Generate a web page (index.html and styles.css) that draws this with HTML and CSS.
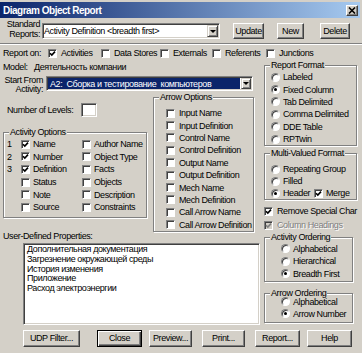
FILE: index.html
```html
<!DOCTYPE html>
<html lang="en">
<head>
  <meta charset="UTF-8">
  <title>Diagram Object Report</title>
  <link rel="stylesheet" href="styles.css">
</head>
<body>
  <div class="dialog">
    <div class="titlebar">
      <span class="title">Diagram Object Report</span>
      <span class="close-btn"><svg width="8" height="7" viewBox="0 0 8 7"><path d="M1 0.5 L7 6.5 M7 0.5 L1 6.5" stroke="#000" stroke-width="1.6"/></svg></span>
    </div>

    <div class="std-row">
      <div class="std-label">Standard<br>Reports:</div>
      <div class="combo std-combo">
        <span class="combo-text">Activity Definition &lt;breadth first&gt;</span>
        <span class="drop-btn"><span class="arrow"></span></span>
      </div>
      <button class="btn btn-update">Update</button>
      <button class="btn btn-new">New</button>
      <button class="btn btn-delete">Delete</button>
    </div>
    <div class="separator"></div>

    <div class="report-on">
      <span>Report on:</span>
      <label class="chk"><span class="cb"><svg width="7" height="7" viewBox="0 0 7 7"><polyline points="1,3.2 2.8,5 6,1.6" fill="none" stroke="#000" stroke-width="1.6"/></svg></span>Activities</label>
      <label class="chk"><span class="cb"></span>Data Stores</label>
      <label class="chk"><span class="cb"></span>Externals</label>
      <label class="chk"><span class="cb"></span>Referents</label>
      <label class="chk"><span class="cb"></span>Junctions</label>
    </div>

    <div class="main">
      <div class="left">
        <div class="model">
          <span class="model-label">Model:</span>
          <span>Деятельность компании</span>
        </div>
        <div class="start">
          <div class="start-label">Start From<br>Activity:</div>
          <div class="combo start-combo">
            <span class="combo-text">A2:&nbsp; Сборка и тестирование&nbsp; компьютеров</span>
            <span class="drop-btn"><span class="arrow"></span></span>
          </div>
        </div>

        <div class="mid">
          <div class="levels-col">
            <div class="levels">
              <span class="levels-label">Number of Levels:</span>
              <span class="field levels-box"></span>
            </div>
            <fieldset class="group act-opts">
              <legend>Activity Options</legend>
              <div class="opts">
                <span>1</span>
                <label class="chk"><span class="cb"><svg width="7" height="7" viewBox="0 0 7 7"><polyline points="1,3.2 2.8,5 6,1.6" fill="none" stroke="#000" stroke-width="1.6"/></svg></span>Name</label>
                <label class="chk"><span class="cb"></span>Author Name</label>
                <span>2</span>
                <label class="chk"><span class="cb"><svg width="7" height="7" viewBox="0 0 7 7"><polyline points="1,3.2 2.8,5 6,1.6" fill="none" stroke="#000" stroke-width="1.6"/></svg></span>Number</label>
                <label class="chk"><span class="cb"></span>Object Type</label>
                <span>3</span>
                <label class="chk"><span class="cb"><svg width="7" height="7" viewBox="0 0 7 7"><polyline points="1,3.2 2.8,5 6,1.6" fill="none" stroke="#000" stroke-width="1.6"/></svg></span>Definition</label>
                <label class="chk"><span class="cb"></span>Facts</label>
                <span></span>
                <label class="chk"><span class="cb"></span>Status</label>
                <label class="chk"><span class="cb"></span>Objects</label>
                <span></span>
                <label class="chk"><span class="cb"></span>Note</label>
                <label class="chk"><span class="cb"></span>Description</label>
                <span></span>
                <label class="chk"><span class="cb"></span>Source</label>
                <label class="chk"><span class="cb"></span>Constraints</label>
              </div>
            </fieldset>
          </div>

          <fieldset class="group arrow-opts">
            <legend>Arrow Options</legend>
            <div class="opts">
              <label class="chk"><span class="cb"></span>Input Name</label>
              <label class="chk"><span class="cb"></span>Input Definition</label>
              <label class="chk"><span class="cb"></span>Control Name</label>
              <label class="chk"><span class="cb"></span>Control Definition</label>
              <label class="chk"><span class="cb"></span>Output Name</label>
              <label class="chk"><span class="cb"></span>Output Definition</label>
              <label class="chk"><span class="cb"></span>Mech Name</label>
              <label class="chk"><span class="cb"></span>Mech Definition</label>
              <label class="chk"><span class="cb"></span>Call Arrow Name</label>
              <label class="chk"><span class="cb"></span>Call Arrow Definition</label>
            </div>
          </fieldset>
        </div>

        <div class="udp-label">User-Defined Properties:</div>
        <div class="field udp-list">
          <div>Дополнительная документация</div>
          <div>Загрезнение окружающей среды</div>
          <div>История изменения</div>
          <div>Приложение</div>
          <div>Расход электроэнергии</div>
        </div>
      </div>

      <div class="right">
        <fieldset class="group rpt-format">
          <legend>Report Format</legend>
          <div class="opts">
            <label class="chk"><span class="rb"></span>Labeled</label>
            <label class="chk"><span class="rb on"></span>Fixed Column</label>
            <label class="chk"><span class="rb"></span>Tab Delimited</label>
            <label class="chk"><span class="rb"></span>Comma Delimited</label>
            <label class="chk"><span class="rb"></span>DDE Table</label>
            <label class="chk"><span class="rb"></span>RPTwin</label>
          </div>
        </fieldset>

        <fieldset class="group multi">
          <legend>Multi-Valued Format</legend>
          <div class="opts">
            <label class="chk"><span class="rb"></span>Repeating Group</label>
            <label class="chk"><span class="rb"></span>Filled</label>
            <div class="header-row">
              <label class="chk header-item"><span class="rb on"></span>Header</label>
              <label class="chk"><span class="cb"><svg width="7" height="7" viewBox="0 0 7 7"><polyline points="1,3.2 2.8,5 6,1.6" fill="none" stroke="#000" stroke-width="1.6"/></svg></span>Merge</label>
            </div>
          </div>
        </fieldset>

        <div class="extra">
          <label class="chk"><span class="cb"><svg width="7" height="7" viewBox="0 0 7 7"><polyline points="1,3.2 2.8,5 6,1.6" fill="none" stroke="#000" stroke-width="1.6"/></svg></span>Remove Special Char</label>
          <label class="chk disabled"><span class="cb"><svg width="7" height="7" viewBox="0 0 7 7"><polyline points="1,3.2 2.8,5 6,1.6" fill="none" stroke="#808080" stroke-width="1.6"/></svg></span>Column Headings</label>
        </div>

        <fieldset class="group act-order">
          <legend>Activity Ordering</legend>
          <div class="opts">
            <label class="chk"><span class="rb"></span>Alphabetical</label>
            <label class="chk"><span class="rb"></span>Hierarchical</label>
            <label class="chk"><span class="rb on"></span>Breadth First</label>
          </div>
        </fieldset>

        <fieldset class="group arrow-order">
          <legend>Arrow Ordering</legend>
          <div class="opts">
            <label class="chk"><span class="rb"></span>Alphabetical</label>
            <label class="chk"><span class="rb on"></span>Arrow Number</label>
          </div>
        </fieldset>
      </div>
    </div>

    <div class="buttons">
      <button class="btn btn-udp">UDP Filter...</button>
      <button class="btn btn-default btn-close">Close</button>
      <button class="btn btn-preview">Preview...</button>
      <button class="btn btn-print">Print...</button>
      <button class="btn btn-report">Report...</button>
      <button class="btn btn-help">Help</button>
    </div>
  </div>
</body>
</html>
```

FILE: styles.css
```css
* {
  box-sizing: border-box;
}
body {
  margin: 0;
  background: #d4d0c8;
  font-family: "Liberation Sans", Arial, sans-serif;
  font-size: 9px;
  letter-spacing: -0.4px;
  color: #000;
}
.dialog {
  width: 362px;
  height: 353px;
  overflow: hidden;
  padding-top: 2px;
}

/* title bar */
.titlebar {
  height: 16px;
  margin-right: 2px;
  padding: 0 2px 0 3px;
  display: flex;
  align-items: center;
  justify-content: space-between;
  background: linear-gradient(to right, #0a246a, #a6caf0);
}
.title {
  color: #fff;
  font-weight: bold;
  font-size: 10px;
  letter-spacing: -0.5px;
}
.close-btn {
  width: 12px;
  height: 11px;
  display: flex;
  align-items: center;
  justify-content: center;
  background: #d4d0c8;
  border: 1px solid;
  border-color: #fff #404040 #404040 #fff;
  box-shadow: inset -1px -1px #808080;
}

/* common controls */
.btn {
  font: inherit;
  letter-spacing: inherit;
  color: #000;
  padding: 0;
  height: 16px;
  background: #d4d0c8;
  border: 1px solid;
  border-color: #fff #404040 #404040 #fff;
  box-shadow: inset -1px -1px #808080;
}
.btn-default {
  border: 1px solid #000;
  box-shadow: inset 1px 1px #fff, inset -1px -1px #404040, inset -2px -2px #808080;
}
.field {
  background: #fff;
  border: 1px solid;
  border-color: #808080 #fff #fff #808080;
  box-shadow: inset 1px 1px #404040, inset -1px -1px #d4d0c8;
}
.combo {
  display: flex;
  align-items: center;
  background: #fff;
  border: 1px solid;
  border-color: #808080 #fff #fff #808080;
  box-shadow: inset 1px 1px #404040, inset -1px -1px #d4d0c8;
}
.combo-text {
  flex: 1;
  padding-left: 1px;
  white-space: nowrap;
  overflow: hidden;
}
.drop-btn {
  width: 11px;
  align-self: stretch;
  margin: 1px;
  display: flex;
  align-items: center;
  justify-content: center;
  background: #d4d0c8;
  border: 1px solid;
  border-color: #d4d0c8 #404040 #404040 #d4d0c8;
  box-shadow: inset 1px 1px #fff, inset -1px -1px #808080;
}
.arrow {
  width: 0;
  height: 0;
  border-left: 3px solid transparent;
  border-right: 3px solid transparent;
  border-top: 3px solid #000;
}
.chk {
  display: flex;
  align-items: center;
  gap: 4px;
  white-space: nowrap;
}
.cb {
  width: 9px;
  height: 9px;
  flex: none;
  display: flex;
  align-items: center;
  justify-content: center;
  background: #fff;
  border: 1px solid;
  border-color: #808080 #fff #fff #808080;
  box-shadow: inset 1px 1px #404040;
}
.rb {
  width: 9px;
  height: 9px;
  flex: none;
  display: flex;
  align-items: center;
  justify-content: center;
  background: #fff;
  border: 1px solid;
  border-color: #808080 #fff #fff #808080;
  border-radius: 50%;
  box-shadow: inset 1px 1px #404040;
}
.rb.on::after {
  content: "";
  width: 3px;
  height: 3px;
  border-radius: 50%;
  background: #000;
}
.disabled {
  color: #808080;
  text-shadow: 1px 1px #fff;
}
.disabled .cb {
  background: #d4d0c8;
}
.group {
  margin: 0;
  padding: 0;
  min-width: 0;
  border: 1px solid #808080;
  box-shadow: inset 1px 1px #fff, 1px 1px #fff;
}
.group legend {
  margin-left: 5px;
  padding: 0 1px;
  line-height: 9px;
  background: #d4d0c8;
}
.opts {
  display: grid;
  align-items: center;
}

/* standard reports row */
.std-row {
  margin-top: 2px;
  height: 19px;
  display: flex;
  align-items: flex-end;
}
.std-label {
  width: 40px;
  text-align: right;
  line-height: 9.5px;
}
.std-combo {
  margin-left: 2px;
  width: 178px;
  height: 16px;
}
.std-combo .combo-text {
  padding-left: 1px;
}
.btn-update {
  margin-left: 13px;
  width: 31px;
}
.btn-new {
  margin-left: 13px;
  width: 27px;
}
.btn-delete {
  margin-left: 16px;
  width: 30px;
}
.separator {
  margin-top: 4px;
  height: 2px;
  border-top: 1px solid #808080;
  border-bottom: 1px solid #fff;
}

/* report on */
.report-on {
  margin-top: 3px;
  height: 10px;
  padding-left: 3px;
  display: grid;
  grid-template-columns: 45px 53px 59px 52px 54px auto;
  align-items: center;
}

/* main area */
.main {
  margin-top: 2px;
  display: flex;
}
.left {
  width: 260px;
  padding-left: 3px;
}
.model {
  margin-top: 2px;
  height: 10px;
  display: flex;
  align-items: center;
}
.model-label {
  width: 31px;
}
.start {
  margin-top: 4px;
  height: 15px;
  display: flex;
  align-items: flex-start;
}
.start-label {
  width: 40px;
  text-align: right;
  line-height: 8.5px;
}
.start-combo {
  margin-left: 3px;
  width: 207px;
  height: 15px;
}
.start-combo .combo-text {
  align-self: stretch;
  margin: 1px 0 1px 1px;
  padding-left: 2px;
  display: flex;
  align-items: center;
  background: #0a246a;
  color: #fff;
}
.start-combo .drop-btn {
  width: 10px;
}

.mid {
  margin-top: 2px;
  display: flex;
  align-items: flex-start;
}
.levels-col {
  width: 150px;
}
.levels {
  margin-top: 10px;
  height: 14px;
  padding-left: 4px;
  display: flex;
  align-items: center;
}
.levels-label {
  width: 74px;
}
.levels-box {
  width: 16px;
  height: 14px;
}
.act-opts {
  margin-top: 11px;
  width: 144px;
}
.act-opts .opts {
  padding: 1px 0 3px 3px;
  grid-template-columns: 14px 61px auto;
  grid-auto-rows: 12.6px;
}
.act-opts .chk {
  gap: 3px;
}
.arrow-opts {
  margin-left: 0;
  width: 101px;
}
.arrow-opts .opts {
  padding: 5px 0 0 12px;
  grid-auto-rows: 12.4px;
}

.udp-label {
  height: 8px;
  line-height: 8px;
  white-space: nowrap;
}
.udp-list {
  margin: 3px 0 0 20px;
  width: 237px;
  height: 82px;
  padding: 1px 3px;
  line-height: 9.8px;
}

/* right column */
.right {
  width: 93px;
  margin-left: 4px;
  padding-top: 1px;
}
.rpt-format .opts {
  padding: 1px 0 0 6px;
  grid-auto-rows: 12.4px;
}
.multi {
  margin-top: 3px;
}
.multi .opts {
  padding: 5px 0 0 6px;
  grid-auto-rows: 12px;
}
.rpt-format .chk,
.multi .chk,
.act-order .chk,
.arrow-order .chk {
  gap: 3px;
}
.header-row {
  display: flex;
  align-items: center;
}
.header-item {
  width: 43px;
}
.extra {
  margin-top: 4px;
  display: grid;
  grid-auto-rows: 14px;
  align-items: center;
}
.act-order {
  margin-top: 1px;
  width: 89px;
}
.act-order .opts {
  padding: 0 0 1px 16px;
  grid-auto-rows: 12.5px;
}
.arrow-order {
  margin-top: 7px;
  width: 89px;
}
.arrow-order .opts {
  margin-top: -2px;
  padding: 0 0 2px 16px;
  grid-auto-rows: 12px;
}

/* bottom buttons */
.buttons {
  margin-top: 5px;
  padding-left: 23px;
  display: flex;
}
.buttons .btn {
  height: 17px;
}
.btn-udp {
  width: 57px;
}
.btn-close {
  margin-left: 17px;
  width: 45px;
}
.btn-preview {
  margin-left: 7px;
  width: 43px;
}
.btn-print {
  margin-left: 10px;
  width: 43px;
}
.btn-report {
  margin-left: 10px;
  width: 45px;
}
.btn-help {
  margin-left: 7px;
  width: 45px;
}
```
